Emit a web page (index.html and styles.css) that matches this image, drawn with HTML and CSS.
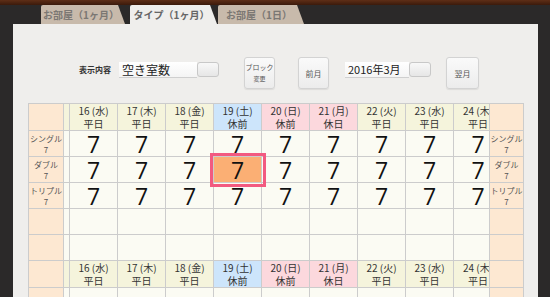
FILE: index.html
```html
<!DOCTYPE html>
<html lang="ja">
<head>
  <meta charset="UTF-8">
  <meta name="viewport" content="width=device-width, initial-scale=1.0">
  <title>在庫カレンダー</title>
  <link rel="stylesheet" href="styles.css">
</head>
<body>
  <div class="wood"></div>

  <div class="tabs">
    <div class="tab">お部屋（1ヶ月）</div>
    <div class="tab active">タイプ（1ヶ月）</div>
    <div class="tab">お部屋（1日）</div>
  </div>

  <div class="panel">
    <div class="controls">
      <div class="ctl-label">表示内容</div>
      <div class="select">
        <div class="select-text">空き室数</div>
        <div class="select-btn"></div>
      </div>
      <div class="btn btn-block"><span>ブロック</span><span class="small">変更</span></div>
      <div class="btn btn-prev">前月</div>
      <div class="select select-month">
        <div class="select-text">2016年3月</div>
        <div class="select-btn"></div>
      </div>
      <div class="btn btn-next">翌月</div>
    </div>

    <div class="table-wrap">
      <table class="cal">
        <colgroup>
          <col class="c-lbl"><col class="c-sp">
          <col class="c-day"><col class="c-day"><col class="c-day"><col class="c-day"><col class="c-day">
          <col class="c-day"><col class="c-day"><col class="c-day"><col class="c-cut">
          <col class="c-rlbl">
        </colgroup>
        <tr class="head">
          <td class="lbl"></td><td class="sp"></td>
          <td class="wk">16 (水)<br>平日</td>
          <td class="wk">17 (木)<br>平日</td>
          <td class="wk">18 (金)<br>平日</td>
          <td class="sat">19 (土)<br>休前</td>
          <td class="hol">20 (日)<br>休前</td>
          <td class="hol">21 (月)<br>休日</td>
          <td class="wk">22 (火)<br>平日</td>
          <td class="wk">23 (水)<br>平日</td>
          <td class="wk cut"><div>24 (木)<br>平日</div></td>
          <td class="lbl"></td>
        </tr>
        <tr class="row">
          <td class="lbl">シングル<br>7</td><td class="sp"></td>
          <td class="n">7</td><td class="n">7</td><td class="n">7</td><td class="n">7</td><td class="n">7</td>
          <td class="n">7</td><td class="n">7</td><td class="n">7</td><td class="n cut"><div>7</div></td>
          <td class="lbl">シングル<br>7</td>
        </tr>
        <tr class="row">
          <td class="lbl">ダブル<br>7</td><td class="sp"></td>
          <td class="n">7</td><td class="n">7</td><td class="n">7</td><td class="n picked">7</td><td class="n">7</td>
          <td class="n">7</td><td class="n">7</td><td class="n">7</td><td class="n cut"><div>7</div></td>
          <td class="lbl">ダブル<br>7</td>
        </tr>
        <tr class="row">
          <td class="lbl">トリプル<br>7</td><td class="sp"></td>
          <td class="n">7</td><td class="n">7</td><td class="n">7</td><td class="n">7</td><td class="n">7</td>
          <td class="n">7</td><td class="n">7</td><td class="n">7</td><td class="n cut"><div>7</div></td>
          <td class="lbl">トリプル<br>7</td>
        </tr>
        <tr class="row">
          <td class="lbl"></td><td class="sp"></td>
          <td></td><td></td><td></td><td></td><td></td><td></td><td></td><td></td><td></td>
          <td class="lbl"></td>
        </tr>
        <tr class="row">
          <td class="lbl"></td><td class="sp"></td>
          <td></td><td></td><td></td><td></td><td></td><td></td><td></td><td></td><td></td>
          <td class="lbl"></td>
        </tr>
        <tr class="head">
          <td class="lbl"></td><td class="sp"></td>
          <td class="wk">16 (水)<br>平日</td>
          <td class="wk">17 (木)<br>平日</td>
          <td class="wk">18 (金)<br>平日</td>
          <td class="sat">19 (土)<br>休前</td>
          <td class="hol">20 (日)<br>休前</td>
          <td class="hol">21 (月)<br>休日</td>
          <td class="wk">22 (火)<br>平日</td>
          <td class="wk">23 (水)<br>平日</td>
          <td class="wk cut"><div>24 (木)<br>平日</div></td>
          <td class="lbl"></td>
        </tr>
        <tr class="row">
          <td class="lbl"></td><td class="sp"></td>
          <td></td><td></td><td></td><td></td><td></td><td></td><td></td><td></td><td></td>
          <td class="lbl"></td>
        </tr>
      </table>
    </div>
  </div>
</body>
</html>
```

FILE: styles.css
```css
body {
  margin: 0;
  width: 550px;
  height: 297px;
  overflow: hidden;
  background-color: #2b2929;
  font-family: "Noto Sans CJK JP", sans-serif;
  color: #333;
}

.wood {
  height: 5px;
  background: linear-gradient(#5e2e17, #3b1a0b);
}

/* tabs */
.tabs {
  display: flex;
  height: 19px;
  padding-left: 41px;
}

.tab {
  width: 86px;
  height: 19px;
  line-height: 19px;
  padding-right: 4px;
  box-sizing: border-box;
  text-align: center;
  font-size: 10px;
  font-weight: bold;
  color: #7b7773;
  background-color: #c8baab;
  border-radius: 2px 0 0 0;
  clip-path: polygon(0 0, calc(100% - 7px) 0, 100% 100%, 0 100%);
}

.tab:first-child {
  width: 84px;
}

.tab.active {
  width: 87px;
  margin: 0 1px 0 5px;
  color: #666;
  background-color: #efeeec;
}

/* paper */
.panel {
  width: 525px;
  height: 280px;
  margin-left: 13px;
  background-color: #efeeec;
  overflow: hidden;
}

.controls {
  display: flex;
  align-items: flex-start;
  height: 32px;
  margin-top: 33px;
  padding-left: 66px;
}

.ctl-label {
  margin-top: 7px;
  font-size: 8px;
  font-weight: bold;
  color: #333;
}

.select {
  display: flex;
  margin: 5px 0 0 8px;
}

.select-text {
  width: 75px;
  height: 15px;
  padding-left: 3px;
  font-size: 12px;
  line-height: 15px;
  color: #222;
  background: linear-gradient(#fff, #f4f4f4);
  border-bottom: 1px solid #cfcfcf;
}

.select-btn {
  width: 20px;
  height: 13px;
  border: 1px solid #c8c8c8;
  border-radius: 3px;
  background: linear-gradient(#f8f8f8, #e6e6e6);
}

.select-month {
  margin-left: 16px;
}

.select-month .select-text {
  width: 61px;
  font-size: 11px;
}

.btn {
  display: flex;
  flex-direction: column;
  align-items: center;
  justify-content: center;
  width: 29px;
  height: 30px;
  font-size: 8px;
  line-height: 11px;
  color: #555;
  border: 1px solid #d3d3d3;
  border-radius: 3px;
  background: linear-gradient(#fafafa, #ececec);
  box-shadow: 0 1px 1px rgba(0, 0, 0, 0.08);
}

.btn .small {
  font-size: 6px;
}

.btn-block {
  margin-left: 25px;
  font-size: 7px;
}

.btn-prev {
  margin-left: 23px;
}

.btn-next {
  width: 31px;
  margin-left: 15px;
}

/* calendar */
.table-wrap {
  margin-top: 14px;
  padding-left: 15px;
}

.cal {
  width: 495px;
  table-layout: fixed;
  border-collapse: collapse;
  font-size: 10px;
}

.c-lbl { width: 35px; }
.c-sp { width: 6px; }
.c-day { width: 48px; }
.c-cut { width: 36px; }
.c-rlbl { width: 34px; }

.cal td {
  padding: 0;
  border: 1px solid #cccccc;
  background-color: #fbfbf3;
  text-align: center;
  vertical-align: middle;
  white-space: nowrap;
}

.cal .head td {
  height: 26px;
  line-height: 13px;
  color: #333;
}

.cal .row td {
  height: 25px;
}

.cal td.lbl {
  background-color: #fde8d2;
  font-size: 8px;
  line-height: 11px;
  color: #555;
  overflow: hidden;
}

.cal .head td.sp,
.cal td.wk {
  background-color: #f5f4dc;
}

.cal td.sat {
  background-color: #cde5fb;
}

.cal td.hol {
  background-color: #fcd8dd;
}

.cal td.n {
  font-family: "Open Sans", sans-serif;
  font-weight: 400;
  font-size: 23px;
  line-height: 24px;
  color: #111;
}

.cal td.cut {
  overflow: hidden;
  text-align: left;
}

.cal td.cut div {
  width: 48px;
  text-align: center;
}

.cal td.picked {
  background-color: #fbaf74;
  outline: 3px solid #f25a80;
  outline-offset: 1px;
}
```
